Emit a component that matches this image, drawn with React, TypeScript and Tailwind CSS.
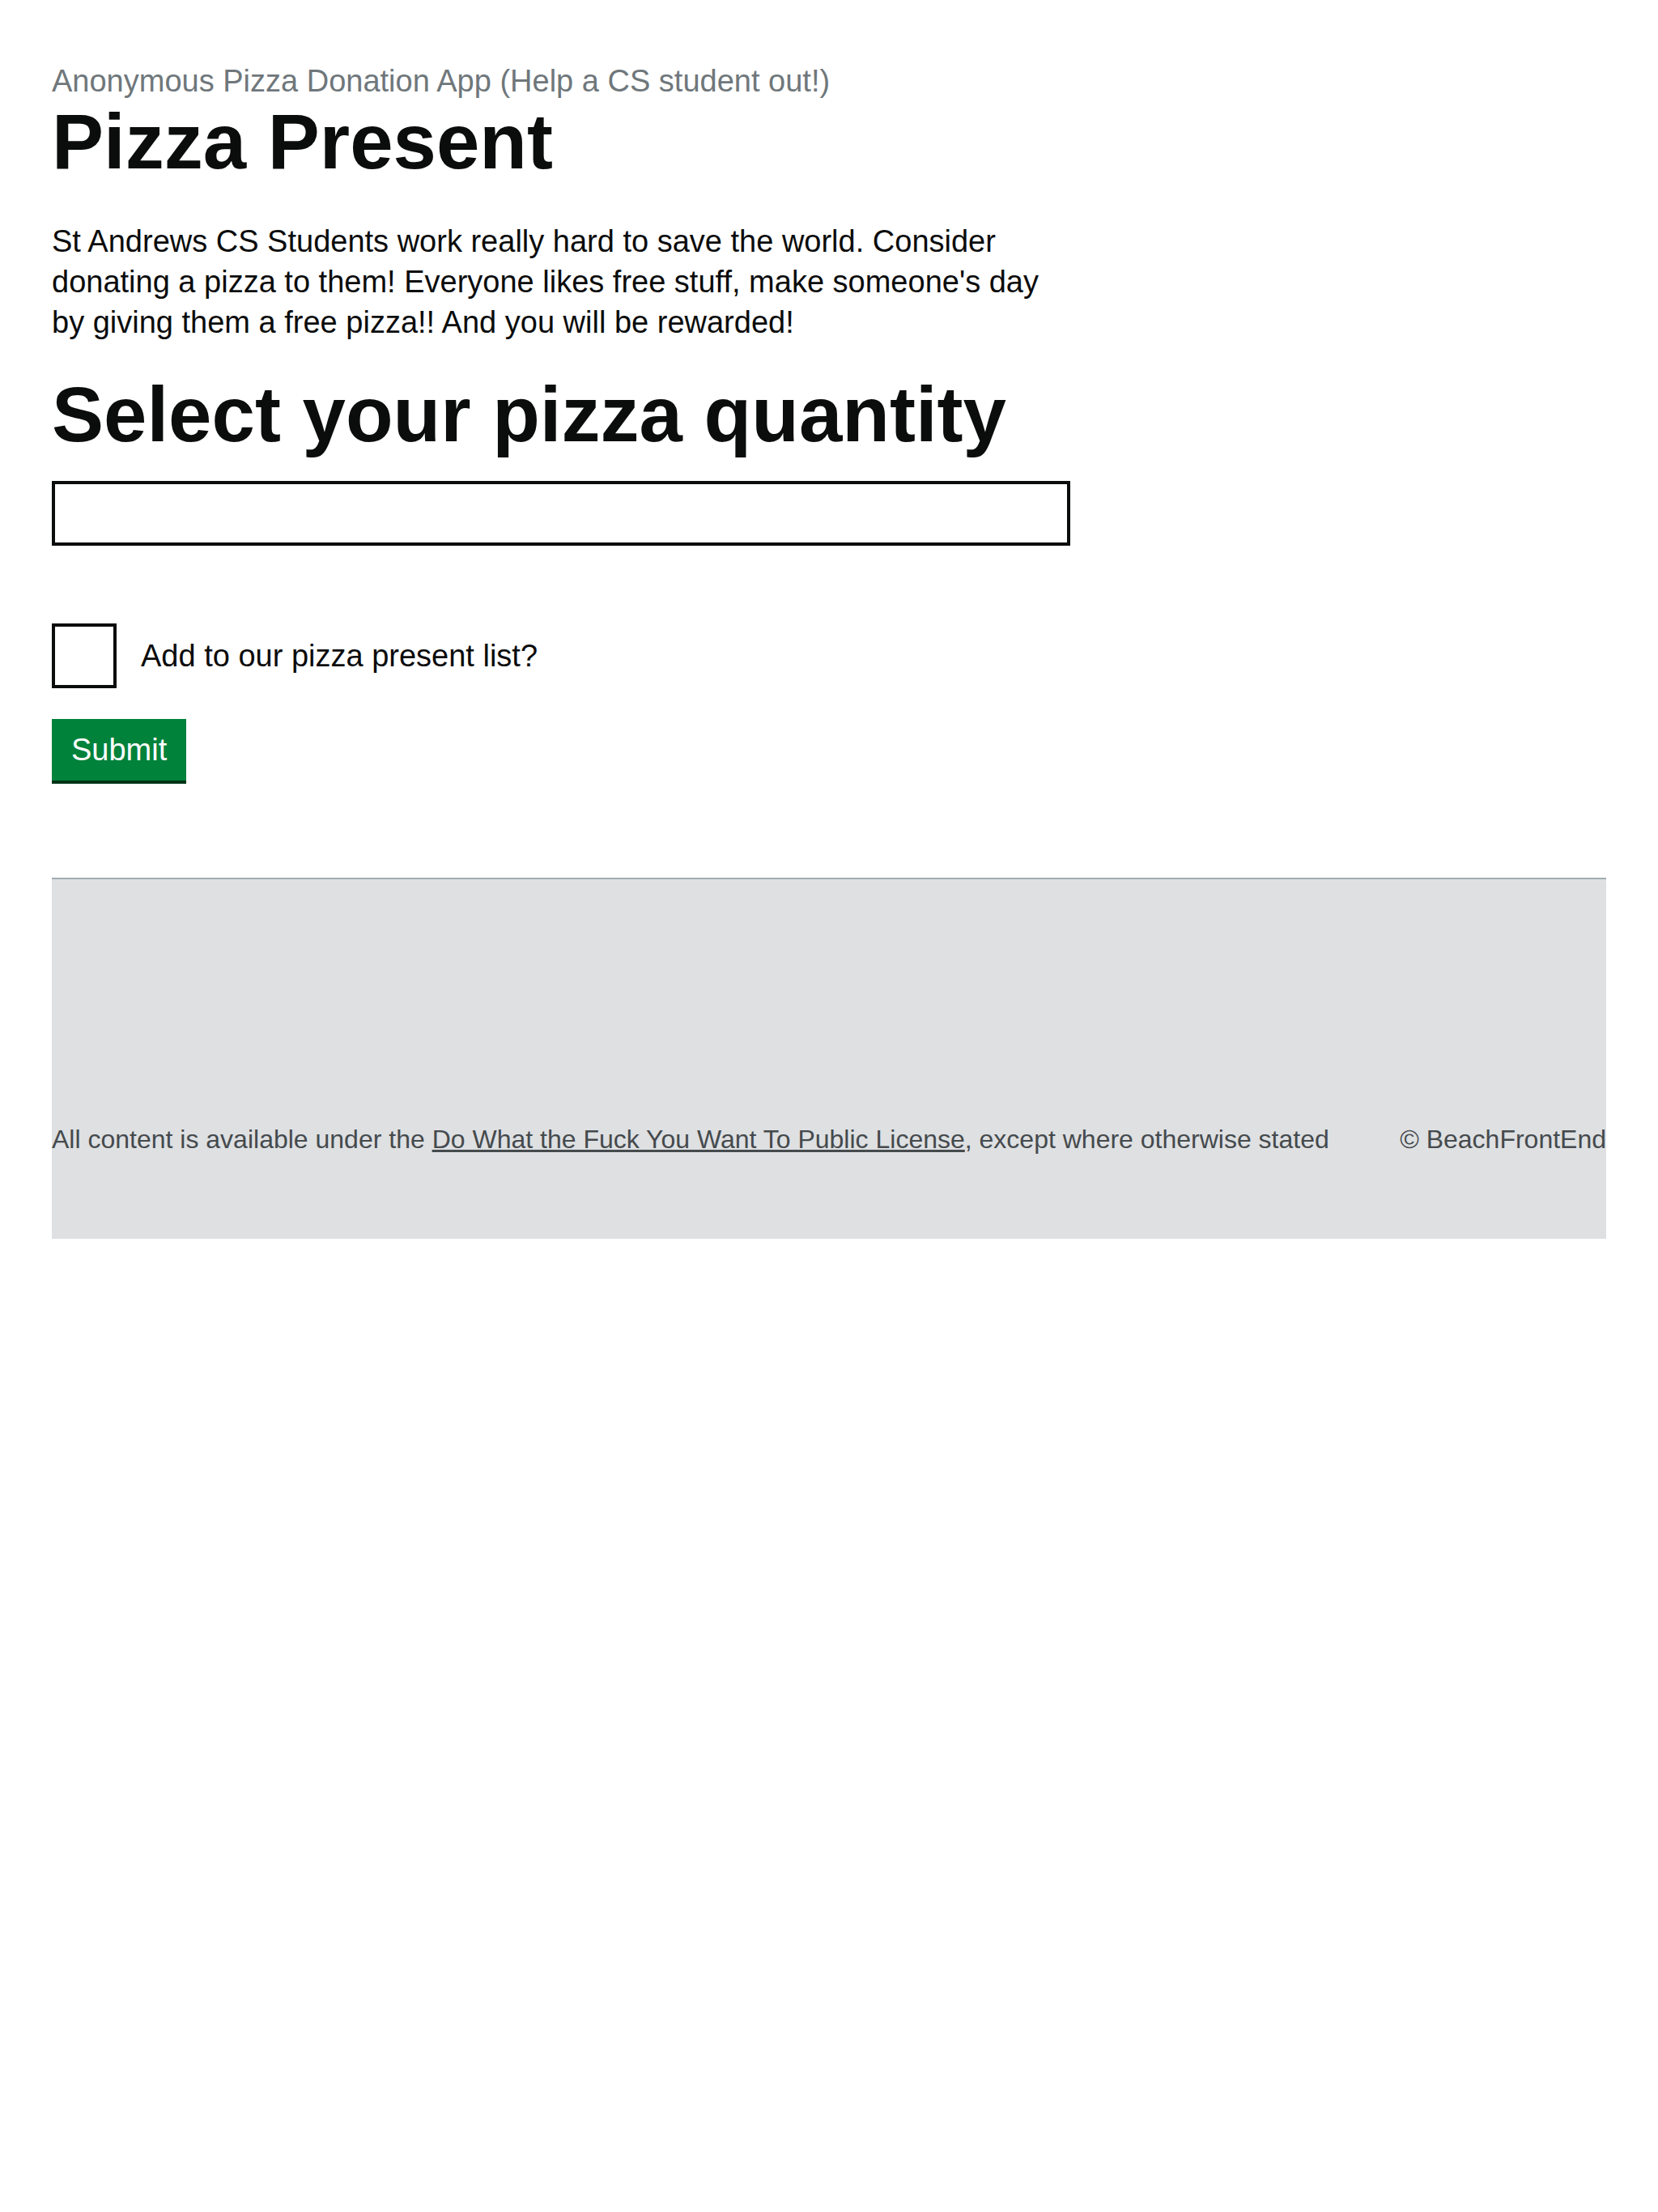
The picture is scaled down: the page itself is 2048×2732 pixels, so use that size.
import React, { useState } from "react";

export default function App() {
  const [quantity, setQuantity] = useState("");
  const [addToList, setAddToList] = useState(false);

  return (
    <div className="min-h-screen bg-white font-['Liberation_Sans',Arial,sans-serif] text-[#0b0c0c]">
      <div className="ml-[64px] w-[1920px]">
        <main className="pt-[75px]">
          <span className="block text-[38px] leading-[50px] text-[#6f777b]">
            Anonymous Pizza Donation App (Help a CS student out!)
          </span>
          <h1 className="text-[96px] leading-[100px] font-bold">Pizza Present</h1>
          <p className="mt-[48px] w-[1260px] text-[38px] leading-[50px]">
            St Andrews CS Students work really hard to save the world. Consider
            donating a pizza to them! Everyone likes free stuff, make someone's
            day by giving them a free pizza!! And you will be rewarded!
          </p>

          <form onSubmit={(e) => e.preventDefault()}>
            <label
              htmlFor="quantity"
              className="mt-[39px] block text-[96px] leading-[100px] font-bold"
            >
              Select your pizza quantity
            </label>
            <input
              id="quantity"
              type="text"
              value={quantity}
              onChange={(e) => setQuantity(e.target.value)}
              className="mt-[32px] block h-[80px] w-[1258px] border-4 border-[#0b0c0c] bg-white px-[10px] text-[38px] outline-none"
            />

            <div className="mt-[96px] flex items-center">
              <button
                type="button"
                role="checkbox"
                aria-checked={addToList}
                onClick={() => setAddToList(!addToList)}
                className="flex h-[80px] w-[80px] items-center justify-center border-4 border-[#0b0c0c] bg-white"
              >
                {addToList && (
                  <span className="mb-[8px] block h-[22px] w-[44px] -rotate-45 border-b-[10px] border-l-[10px] border-[#0b0c0c]"></span>
                )}
              </button>
              <span
                className="ml-[30px] text-[38px] leading-[50px] cursor-pointer"
                onClick={() => setAddToList(!addToList)}
              >
                Add to our pizza present list?
              </span>
            </div>

            <button
              type="submit"
              className="mt-[38px] flex h-[76px] items-center bg-[#00823b] px-[24px] text-[38px] leading-none text-white shadow-[0_4px_0_#003418]"
            >
              Submit
            </button>
          </form>
        </main>

        <footer className="mt-[120px] border-t-2 border-[#a1acb2] bg-[#dee0e2] pt-[301px] pb-[103px] text-[32px] leading-[40px] text-[#454a4d]">
          <div className="flex items-center justify-between">
            <span>
              All content is available under the{" "}
              <a href="#" className="underline text-[#454a4d]">
                Do What the Fuck You Want To Public License
              </a>
              , except where otherwise stated
            </span>
            <span>© BeachFrontEnd</span>
          </div>
        </footer>
      </div>
    </div>
  );
}
